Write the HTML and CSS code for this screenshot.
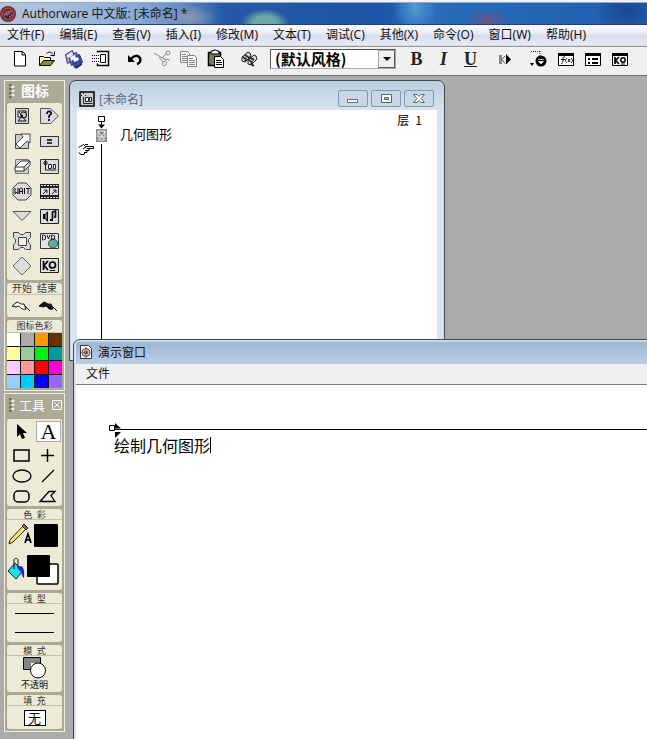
FILE: index.html
```html
<!DOCTYPE html>
<html lang="zh-CN">
<head>
<meta charset="utf-8">
<title>Authorware 中文版</title>
<link rel="stylesheet" href="styles.css">
</head>
<body>
<header class="titlebar">
  <svg class="logo" width="18" height="18" viewBox="0 0 18 18"><circle cx="8" cy="9" r="8" fill="#74282f"/><circle cx="8" cy="9" r="6.5" fill="#b8424e"/><circle cx="8" cy="9" r="5" fill="#27353a"/><path d="M4 10c1-4 5-5 8-3c-2 0-3 1-4 3zM9 12c2 0 3-1 3-3" fill="#b84850" stroke="#d08080" stroke-width=".6"/></svg>
  <h1>Authorware 中文版: [未命名] *</h1>
</header>
<nav class="menubar">
  <button>文件(F)</button><button>编辑(E)</button><button>查看(V)</button><button>插入(I)</button><button>修改(M)</button><button>文本(T)</button><button>调试(C)</button><button>其他(X)</button><button>命令(O)</button><button>窗口(W)</button><button>帮助(H)</button>
</nav>
<div class="toolbar">
  <div class="group">
    <button aria-label="新建"><svg width="20" height="20" viewBox="0 0 20 20"><path d="M4.500 2.500h8l3 3v11.500h-11zM12 2.500v3.500h3.500" fill="#fff" stroke="#000"/></svg></button>
    <button aria-label="打开"><svg width="20" height="20" viewBox="0 0 20 20"><path d="M2.500 16.500v-9h4l1 1h6v3" fill="#ffffb0" stroke="#000"/><path d="M2.500 16.500l4-5h11l-4 5z" fill="#8c8c38" stroke="#000"/><path d="M9.500 4.500c2-2 5-2 6.500 1M17.500 2.500v4h-4" fill="none" stroke="#000"/></svg></button>
    <button aria-label="全部保存"><svg width="20" height="20" viewBox="0 0 20 20"><g stroke="#303078"><path d="M1.500 5.500l7-4l3 9l-8 4z" fill="#aab2e4"/><path d="M4.500 7.500l8-4l3 9l-8 4z" fill="#6974c2"/><path d="M7.500 9.500l8-4l3 8l-8 5z" fill="#3b47a8"/></g><path d="M3 6l5-3l1 3l-5 3zM6 8l5-2l1 3l-5 3zM9 10l5-2l1 3l-5 2z" fill="#f4f4ff"/><path d="M11 18l7-4v2l-6 4z" fill="#22266a"/></svg></button>
    <button aria-label="导入"><svg width="20" height="20" viewBox="0 0 20 20"><path d="M6.500 3.500v-1h11v14h-11v-2" fill="#fff" stroke="#000" stroke-width="1.500"/><path d="M1 6.500h8M1 9.500h8M1 12.500h8" stroke="#000" stroke-dasharray="1 1"/><path d="M9.500 5.500h5v8h-5z" fill="#fff" stroke="#000"/></svg></button>
  </div>
  <div class="group">
    <button aria-label="撤消"><svg width="20" height="20" viewBox="0 0 20 20"><path d="M6 10c3-4 7-4 9-1c1 3 0 5-3 6" fill="none" stroke="#000" stroke-width="2.500"/><path d="M3 6v7h7z"/></svg></button>
    <button aria-label="剪切"><svg width="20" height="20" viewBox="0 0 20 20" fill="none" stroke="#8b8b8b"><path d="M2 4l12 7M7 8l4 5M10 9l4-4"/><circle cx="16" cy="4" r="2"/><path d="M13 10l5 1M11 13c3-2 4 0 3 3c-3 2-4 0-3-3"/></svg></button>
    <button aria-label="复制"><svg width="20" height="20" viewBox="0 0 20 20" fill="#f6f6f6" stroke="#858585"><path d="M1.500 2.500h7l2 2v9h-9zM3 5.500h4M3 7.500h6M3 9.500h6M3 11.500h5"/><path d="M8.500 6.500h7l2 2v9h-9zM10 9.500h4M10 11.500h6M10 13.500h6M10 15.500h6"/></svg></button>
    <button aria-label="粘贴"><svg width="20" height="20" viewBox="0 0 20 20"><path d="M2.500 3.500h12v13h-12z" fill="#7c7c4c" stroke="#000" stroke-width="1.500"/><path d="M5 4V2h2l1-1h2l1 1h2v3H5z" fill="#eee" stroke="#000"/><path d="M8.500 7.500h6l3 3v8h-9z" fill="#fff" stroke="#000"/><path d="M10 11.500h5M10 13.500h6M10 15.500h6" stroke="#000"/></svg></button>
  </div>
  <div class="group">
    <button aria-label="查找"><svg width="20" height="20" viewBox="0 0 20 20" fill="#d8d8d8" stroke="#222"><path d="M8 3l-6 5v4l3 1l6-6l-1-3zM14 6l-6 5v4l3 1l6-6l-1-3z"/><path d="M3 8l3 2l-1 3M5 6l3 2M9 11l3 2l-1 3M11 9l3 2M8 8l3 1M11 15l3 2" stroke-width="1.700"/></svg></button>
  </div>
  <div class="combo"><select aria-label="文本风格"><option>(默认风格)</option></select><i></i></div>
  <div class="group letters">
    <button aria-label="粗体"><b>B</b></button><button aria-label="斜体"><em>I</em></button><button aria-label="下划线"><u>U</u></button>
  </div>
  <div class="group">
    <button aria-label="运行"><svg width="20" height="20" viewBox="0 0 20 20"><path d="M4 6h3v9H4z" fill="#888"/><path d="M10 7l-3 3.500l3 4" fill="none" stroke="#555"/><path d="M11 5l5 5.500l-5 5z"/></svg></button>
  </div>
  <div class="group">
    <button aria-label="控制面板"><svg width="20" height="20" viewBox="0 0 20 20"><path d="M2 2.500h9M11 2v5" stroke="#222" stroke-dasharray="1 1"/><circle cx="12" cy="12" r="5.500"/><path d="M9 10.500h6M9.500 12.500h5l-2.500 2.500z" fill="#fff" stroke="#fff" stroke-width=".7"/><path d="M1 14h4l-2 3z"/></svg></button>
    <button aria-label="函数"><svg width="20" height="20" viewBox="0 0 20 20"><path d="M2.500 4.500h15v12h-15z" fill="#fff" stroke="#000"/><path d="M2 4h16v3H2z"/><path d="M9 8c-2-1-2 1-2 3s-1 4-2 4M5 10.500h4M11 9c-2 2-2 3 0 5M15 9c2 2 2 3 0 5M12 10l2 3M14 10l-2 3" fill="none" stroke="#000" stroke-width=".9"/></svg></button>
    <button aria-label="变量"><svg width="20" height="20" viewBox="0 0 20 20"><path d="M2.500 4.500h15v12h-15z" fill="#fff" stroke="#000"/><path d="M2 4h16v3H2zM5 9h2v2H5zM5 13h2v2H5zM9 9h6v2H9zM9 13h6v2H9z"/></svg></button>
    <button aria-label="知识对象"><svg width="20" height="20" viewBox="0 0 20 20"><path d="M2.500 4.500h15v12h-15z" fill="#fff" stroke="#000"/><path d="M2 4h16v3H2z"/><path d="M5 8v7M9 8l-3.500 3.500L9 15" fill="none" stroke="#000" stroke-width="1.700"/><circle cx="13" cy="11" r="2.200" fill="none" stroke="#000" stroke-width="1.500"/><path d="M11 15h4" stroke="#000"/></svg></button>
  </div>
</div>
<main class="workspace">
  <section class="window flow">
    <header>
      <svg width="16" height="16" viewBox="0 0 16 16"><path d="M1 1h14v14H1z" fill="#d0caca" stroke="#000" stroke-width="1.500"/><path d="M4.500 5v7.500h9M2 4.500h5M4.500 2v5" stroke="#222" fill="none"/><path d="M6.500 6.500h3v4h-3zM10.500 6.500h2v4h-2z" fill="#fff" stroke="#222"/><path d="M4.500 3l1.500 1.500l-1.500 1.500l-1.500-1.500z" fill="#fff"/></svg>
      <h2>[未命名]</h2>
      <div class="winbtns">
        <button aria-label="最小化"><svg width="14" height="12" viewBox="0 0 14 12"><path d="M1.500 6.500h10v3h-10z" fill="#fff" stroke="#66717d"/></svg></button>
        <button aria-label="最大化"><svg width="14" height="12" viewBox="0 0 14 12"><path d="M2.500 1.500h10v8h-10z" fill="#fff" stroke="#56616d"/><path d="M5.500 4.500h4v2h-4z" fill="#aebfd0" stroke="#56616d"/></svg></button>
        <button aria-label="关闭"><svg width="14" height="12" viewBox="0 0 14 12"><path d="M1.500 1.500h3.500l2 2l2-2h3.500l-3.500 4l3.500 4h-3.500l-2-2l-2 2h-3.500l3.500-4z" fill="#fff" stroke="#56616d"/></svg></button>
      </div>
    </header>
    <div class="flowbody">
      <div class="line">
        <svg width="32" height="244" viewBox="0 0 32 244"><path d="M21.500 6.500h6v5h-6zM24.500 12v6" fill="#fff" stroke="#000"/><path d="M21 14.500h7l-3.500 4z"/><path d="M19 19h11v13H19z" fill="#8e8e8e"/><path d="M21 21h7v6h-7zM21 22l7 8M28 22l-7 8M22 30h5" fill="none" stroke="#eee"/><path d="M24.500 34v210" stroke="#000"/><path d="M1.500 37.500l5-3l2 2h8v2h-7M12 38.500v2h-4M10 40.500v2h-3M8 42.500l-1 2h-3l-2.500-2M9 37l-3 2M8 34.500h3" fill="#fff" stroke="#000"/></svg>
        <span>几何图形</span>
      </div>
      <p>层&ensp;1</p>
    </div>
  </section>

  <section class="window stage">
    <header>
      <svg width="14" height="16" viewBox="0 0 14 16"><path d="M1.500 1.500h8l3 3v10h-11z" fill="#fff" stroke="#333"/><circle cx="7" cy="8.500" r="4" fill="#dbc5bc" stroke="#553e3b"/><circle cx="7" cy="8.500" r="2" fill="#54403e"/><path d="M7 3v11M2 8.500h10" stroke="#8a706a" stroke-dasharray="1 1"/></svg>
      <h2>演示窗口</h2>
    </header>
    <nav><button>文件</button></nav>
    <div class="canvas">
      <div class="ruler"><svg width="12" height="16" viewBox="0 0 12 16"><path d="M.500 2.500h5v5h-5z" fill="#fff" stroke="#000"/><path d="M6 0l6 5.500H6zM6 9h6l-6 6z"/></svg></div>
      <p class="typed">绘制几何图形</p>
    </div>
  </section>

  <aside class="palette icons">
    <header><i class="grip"></i><h2>图标</h2></header>
    <div class="panel grid">
      <button aria-label="显示"><svg viewBox="0 0 22 20"><path d="M4.500 2.500h13v15h-13z" fill="#d4d4d4" stroke="#333"/><path d="M7 5h8v6H7z" fill="#fff" stroke="#111"/><circle cx="12.500" cy="9" r="3" fill="#ccc" stroke="#111"/><path d="M8 6l7 9H7l5-6" fill="none" stroke="#111"/></svg></button>
      <button aria-label="判断"><svg viewBox="0 0 22 20"><path d="M2.500 2.500h10l8 7.500l-8 7.500h-10z" fill="#ddd" stroke="#555"/><path d="M9 8c0-4 5-3 4 0l-2 2v2M11 13v2" fill="none" stroke="#000" stroke-width="1.700"/></svg></button>
      <button aria-label="移动"><svg viewBox="0 0 22 20"><path d="M4.500 3.500h13v14h-13z" fill="#ccc" stroke="#444"/><path d="M5 13l7-7l-2-3h9v9l-3-2l-7 7z" fill="#fff" stroke="#444"/></svg></button>
      <button aria-label="计算"><svg viewBox="0 0 22 20"><path d="M2.500 5.500h18v10h-18z" fill="#ddd" stroke="#333"/><path d="M9 9h5M9 12h5" stroke="#000" stroke-width="1.500"/></svg></button>
      <button aria-label="擦除"><svg viewBox="0 0 22 20"><path d="M4.500 3.500h13v14h-13z" fill="#ccc" stroke="#777"/><path d="M4 11l6-6h9l-6 6zM4 11v4h9v-4M13 15l6-6V5" fill="#fff" stroke="#333"/></svg></button>
      <button aria-label="群组"><svg viewBox="0 0 22 20"><path d="M2.500 3.500h18v14h-18z" fill="#ddd" stroke="#333"/><path d="M7.500 4v10h11M5 7h5M6 5l3 4M9 5l-3 4" fill="none" stroke="#222"/><path d="M10.500 8.500h3v4h-3zM15.500 8.500h2v4h-2z" fill="#fff" stroke="#222"/></svg></button>
      <button aria-label="等待"><svg viewBox="0 0 22 20"><path d="M7 2h8l5 5v7l-5 5H7l-5-5V7z" fill="#ddd" stroke="#444"/><path d="M4 7v6l1.500-2L7 13V7M8.500 13V8l1-1h1l1 1v5M8.500 10.500h3M13.500 7v6M15 7.500h4M17 7v6" fill="none" stroke="#111"/></svg></button>
      <button aria-label="数字电影"><svg viewBox="0 0 22 20"><path d="M2 3h19v15H2z" fill="#222"/><path d="M3 4.500h17M3 16.500h17" stroke="#ddd" stroke-dasharray="2 1"/><path d="M3 7h8v7H3zM12 7h8v7h-8z" fill="#ddd"/><path d="M5 13l4-4M6 9h3v3M14 13l4-4M15 9h3v3" fill="none" stroke="#222"/></svg></button>
      <button aria-label="导航"><svg viewBox="0 0 22 20"><path d="M2 5.500h18l-9 9z" fill="#ddd" stroke="#555"/></svg></button>
      <button aria-label="声音"><svg viewBox="0 0 22 20"><path d="M2.500 3.500h18v14h-18z" fill="#ddd" stroke="#222"/><path d="M10 5v11l-3-3H5V8h2zM12 13h3v2h-3z"/><path d="M14.500 13V6l3-1v6M16 11h2" fill="none" stroke="#111" stroke-width="1.700"/><path d="M8 8v5" stroke="#ddd"/></svg></button>
      <button aria-label="框架"><svg viewBox="0 0 22 20"><path d="M2.500 1.500h5l2 2h3l2-2h5v5l-2 2v3l2 2v5h-5l-2-2h-3l-2 2h-5v-5l2-2v-3l-2-2z" fill="#ddd" stroke="#444"/><path d="M7.500 6.500h8v8h-8z" fill="#f3f3e9" stroke="#444"/></svg></button>
      <button aria-label="DVD"><svg viewBox="0 0 22 20"><path d="M2.500 2.500h18v15h-18z" fill="#e4e4e4" stroke="#333"/><circle cx="15" cy="12.500" r="4.500" fill="#55a8bb" stroke="#448"/><path d="M11 12l3-3l2 3l-3 3zM16 14l3-1l-2 3z" fill="#74bb55"/><path d="M4.500 4v5h1l2-1V5l-2-1zM9 4l1.500 4L12 4M13.500 4v5l3-1V5l-2-1z" fill="none" stroke="#222"/></svg></button>
      <button aria-label="交互"><svg viewBox="0 0 22 20"><path d="M11 1l9 9l-9 9l-9-9z" fill="#ddd" stroke="#666"/></svg></button>
      <button aria-label="知识对象"><svg viewBox="0 0 22 20"><path d="M2.500 2.500h18v14h-18z" fill="#ddd" stroke="#222"/><path d="M5.500 5v9M10 5l-4 4.500L10 14" fill="none" stroke="#000" stroke-width="1.700"/><circle cx="14.500" cy="9" r="3" fill="none" stroke="#000" stroke-width="1.700"/><path d="M12 14.500h5" stroke="#000"/></svg></button>
    </div>
    <div class="panel">
      <h3 class="large">开始&ensp;结束</h3>
      <div class="flags">
        <button aria-label="开始"><svg viewBox="0 0 22 20"><path d="M2 10l5-4c2 0 3 3 7 2l2 5c-4 1-5-1-7-3l-3 1zM15 10l5 5" fill="#fff" stroke="#111"/></svg></button>
        <button aria-label="结束"><svg viewBox="0 0 22 20"><path d="M2 10l5-4c2 0 3 3 7 2l2 5c-4 1-5-1-7-3l-3 1zM15 10l5 5" fill="#111" stroke="#111"/></svg></button>
      </div>
    </div>
    <div class="panel colours">
      <h3>图标色彩</h3>
      <div class="swatches"><i class="c1"></i><i class="c2"></i><i class="c3"></i><i class="c4"></i><i class="c5"></i><i class="c6"></i><i class="c7"></i><i class="c8"></i><i class="c9"></i><i class="c10"></i><i class="c11"></i><i class="c12"></i><i class="c13"></i><i class="c14"></i><i class="c15"></i><i class="c16"></i></div>
    </div>
  </aside>

  <aside class="palette tools">
    <header><i class="grip"></i><h2>工具</h2><button aria-label="关闭"><svg width="10" height="10" viewBox="0 0 10 10"><path d="M.500 .500h9v9h-9zM2.500 2.500l5 5M7.500 2.500l-5 5" fill="none" stroke="#fff"/></svg></button></header>
    <div class="panel shapes">
      <button aria-label="选择"><svg viewBox="0 0 22 20"><path d="M7 2v13l3-3l2 5l3-1l-2-5h4z"/></svg></button>
      <button class="on" aria-label="文本">A</button>
      <button aria-label="矩形"><svg viewBox="0 0 22 20"><path d="M4 5h15v11H4z" fill="none" stroke="#000" stroke-width="1.500"/></svg></button>
      <button aria-label="直线"><svg viewBox="0 0 22 20"><path d="M4 10.500h13M10.500 4v13" stroke="#000" stroke-width="1.500"/></svg></button>
      <button aria-label="椭圆"><svg viewBox="0 0 22 20"><ellipse cx="12" cy="10" rx="9" ry="6" fill="none" stroke="#000" stroke-width="1.300"/></svg></button>
      <button aria-label="斜线"><svg viewBox="0 0 22 20"><path d="M5 16L17 4" stroke="#000" stroke-width="1.300"/></svg></button>
      <button aria-label="圆角矩形"><svg viewBox="0 0 22 20"><rect x="4" y="5" width="15" height="11" rx="4" fill="none" stroke="#000" stroke-width="1.500"/></svg></button>
      <button aria-label="多边形"><svg viewBox="0 0 22 20"><path d="M3 15.500l9-10h6l-4 4l4 6z" fill="none" stroke="#000" stroke-width="1.300"/></svg></button>
    </div>
    <div class="panel">
      <h3>色&ensp;彩</h3>
      <div class="paint"><svg width="54" height="70" viewBox="0 0 54 70"><path d="M3 20L16 6l3 3L6 22l-4 2z" fill="#ffe85c" stroke="#222"/><path d="M15 6l2-2l4 4l-2 2z" fill="#b65846" stroke="#222"/><path d="M18 23l3-9l3 9M19 20h5" fill="none" stroke="#000" stroke-width="1.700"/><rect x="27" y="4" width="24" height="23" rx="1"/><rect x="30" y="44" width="21" height="20" rx="1" fill="#fff" stroke="#000" stroke-width="1.500"/><rect x="20" y="35" width="23" height="22" rx="1"/><path d="M1 51l7-8l8 8l-7 8z" fill="#22dbed" stroke="#222"/><path d="M7 49v-9c0-2 4-2 4 0v8" fill="none" stroke="#111"/><path d="M10 47c5-3 8 0 7 11c-2 0-2-7-5-8" fill="#2028bd"/></svg></div>
    </div>
    <div class="panel">
      <h3>线&ensp;型</h3>
      <div class="lines"><hr><hr></div>
    </div>
    <div class="panel">
      <h3>模&ensp;式</h3>
      <div class="mode"><svg width="26" height="23" viewBox="0 0 26 23"><path d="M1.500 1.500h17v12h-17z" fill="#858585" stroke="#000"/><path d="M9 7h8v7H9z" fill="#fff"/><circle cx="16" cy="14.500" r="7.500" fill="#fff" stroke="#000"/></svg><span>不透明</span></div>
    </div>
    <div class="panel">
      <h3>填&ensp;充</h3>
      <div class="fill"><button>无</button></div>
    </div>
  </aside>
</main>
</body>
</html>
```
FILE: styles.css
```css
* { box-sizing: border-box; }
body { margin: 0; height: 100vh; display: flex; flex-direction: column; overflow: hidden; font: 12px "Open Sans", "Noto Sans CJK SC", sans-serif; color: #111; background: #ababab; }
h1, h2, h3, p { margin: 0; font-weight: normal; }
h1, h2 { font-size: 12px; }
button { margin: 0; padding: 0; border: 0; background: none; font: inherit; color: inherit; display: flex; align-items: center; justify-content: center; }
svg { display: block; flex: none; }

.titlebar { height: 25px; flex: none; display: flex; align-items: center; gap: 4px; padding-top: 3px; border-bottom: 1px solid #223f76; line-height: 20px;
  background:
    linear-gradient(#eef3f7 0 2px, #91abc0 2px 3px, transparent 3px),
    radial-gradient(ellipse 24px 14px at 265px 23px, #6aa7a6 0 50%, transparent),
    radial-gradient(ellipse 28px 13px at 190px 18px, #8797af, transparent),
    radial-gradient(ellipse 22px 10px at 487px 20px, #6c5585, transparent),
    radial-gradient(ellipse 22px 28px at 415px 8px, #4f9bd6, transparent),
    radial-gradient(ellipse 30px 24px at 626px 10px, #1a4690, transparent),
    linear-gradient(90deg, #b3c2d7 0, #a9bfdd 60px, #88a8d4 140px, #658cc3 180px, #2459a6 225px, #1d55aa 380px, #2a6cba 430px, #1f5db0 100%); }

.menubar { height: 21px; flex: none; display: flex; border-bottom: 1px solid #d8dae2; background: linear-gradient(#fbfcfe, #e7ebf5 45%, #d9deee 50%, #e6eaf6); }
.menubar button { flex: 0 1 auto; padding: 0 7px; line-height: 18px; white-space: nowrap; }
.menubar button + button { margin-left: 1px; }
.menubar { font-family: "Noto Sans", "Noto Sans CJK SC", sans-serif; }

.toolbar { height: 30px; flex: none; display: flex; align-items: center; gap: 7px; padding: 0 6px 4px; background: #f0f0f0; border-top: 1px solid #999; border-bottom: 1px solid #6c6c6c; }
.group { display: flex; }
.group button { width: 27px; height: 24px; }
.letters { font: 18px "Liberation Serif", serif; color: #222; }
.letters em { font-weight: bold; }
.letters u { font-weight: bold; }
.combo { width: 126px; height: 20px; display: flex; background: #fff; border: 1px solid #555; border-right-color: #aaa; border-bottom-color: #aaa; }
.combo select { appearance: none; flex: 1; min-width: 0; border: 0; padding: 0 4px; background: #fff; color: #000; font: bold 15px/18px "Noto Sans CJK SC", sans-serif; }
.combo i { width: 17px; background: #f0f0f0; border: 1px solid #aaa; border-right-color: #555; border-bottom-color: #555; display: grid; place-items: center; }
.combo i::before { content: ""; border: 4px solid transparent; border-top-color: #000; border-bottom: 0; }

.workspace { flex: 1; min-height: 0; position: relative; overflow: hidden; background: #ababab; }
.window { position: absolute; display: flex; flex-direction: column; border: 1px solid #3c4650; }
.window header { display: flex; align-items: center; }
.window h2 { flex: 1; }

.flow { left: 69px; top: 4px; width: 376px; height: 281px; padding: 0 7px 7px; border-radius: 7px 7px 0 0; background: linear-gradient(#bccddf, #d8e4f1 30px); }
.flow header { height: 29px; padding: 6px 3px 0 2px; gap: 4px; color: #586576; }
.winbtns { display: flex; gap: 3px; }
.winbtns button { width: 30px; height: 17px; border: 1px solid #8198ae; border-radius: 2px; background: #c8d7e6; }
.flowbody { flex: 1; min-height: 0; display: flex; justify-content: space-between; background: #fff; font: 13px/20px "Noto Sans CJK SC", sans-serif; color: #000; overflow: hidden; }
.line { display: flex; gap: 11px; }
.line span { padding-top: 14px; }
.flowbody p { padding-right: 15px; font-size: 12px; }

.stage { left: 73px; right: -4px; top: 263px; bottom: -4px; border-radius: 7px 0 0 0; padding-left: 2px; background: #d8e3ef; }
.stage header { height: 24px; padding-left: 3px; gap: 5px; border-radius: 6px 0 0 0; background: linear-gradient(#dce7f3, #9db6d3 3px, #bacee7); }
.stage nav { height: 21px; display: flex; padding: 0 0 3px 10px; background: #f0f0f0; border-bottom: 1px solid #777; }
.canvas { flex: 1; padding: 38px 0 0 33px; background: #fff; }
.ruler { height: 14px; background: linear-gradient(#000, #000) 0 6px / 100% 1px no-repeat; }
.typed { display: block; width: fit-content; margin-left: 5px; border-right: 1px solid #000; font: 16px/16px "Noto Sans CJK SC", sans-serif; color: #000; }

.palette { position: absolute; left: 4px; width: 61px; display: flex; flex-direction: column; gap: 3px; padding: 0 2px 2px; background: #aaaa96; border: 1px solid #f0f0df; }
.icons { top: 4px; }
.tools { top: 317px; }
.palette header { height: 19px; display: flex; align-items: center; gap: 6px; padding-left: 2px; color: #fff; }
.palette h2 { flex: 1; font-size: 14px; line-height: 19px; white-space: nowrap; }
.icons h2 { font-weight: bold; }
.tools header { height: 22px; gap: 4px; }
.tools h2 { font-size: 13px; }
.grip { width: 6px; height: 14px; background: radial-gradient(circle at 1px 1px, #73675a 1px, transparent 2px) 0 0 / 6px 4px, radial-gradient(circle at 4px 3px, #eeeedd 1px, transparent 2px) 0 0 / 6px 4px; }
.panel { background: #ecebd7; border-radius: 3px; }
.grid { display: grid; grid-template-columns: 27px 27px; grid-auto-rows: 25px; padding-bottom: 2px; padding-left: 1px; }
.grid svg, .flags svg, .shapes svg { width: 22px; height: 20px; }
.panel h3 { font-size: 9px; line-height: 11px; height: 11px; text-align: center; white-space: nowrap; border-bottom: 1px solid #c2c1ad; color: #333; }
.panel h3.large { font-size: 10px; height: 12px; }
.panel.colours h3 { height: 13px; line-height: 12px; }
.flags { display: grid; grid-template-columns: 27px 27px; height: 22px; }
.swatches { display: grid; grid-template-columns: repeat(4, 1fr); grid-auto-rows: 13px; gap: 1px; background: #151515; }
.c1 { background: #fff; } .c2 { background: #aaa; } .c3 { background: #ff9800; } .c4 { background: #663300; }
.c5 { background: #ffff99; } .c6 { background: #99cc99; } .c7 { background: #00f20d; } .c8 { background: #009898; }
.c9 { background: #ffccff; } .c10 { background: #ff9898; } .c11 { background: #f00; } .c12 { background: #ff00cb; }
.c13 { background: #99ccff; } .c14 { background: #00ccff; } .c15 { background: #00f; } .c16 { background: #9966ff; }

.shapes { display: grid; grid-template-columns: 27px 27px; grid-template-rows: 25px 22px 20px 20px; }
.shapes .on { background: #fff; border: 1px solid #aaa; font: 22px/20px "Liberation Serif", serif; margin: 2px 0 2px 2px; color: #000; }
.paint { height: 70px; }
.lines { height: 38px; display: flex; flex-direction: column; gap: 18px; padding: 9px 8px 0; }
.lines hr { width: 100%; height: 1px; margin: 0; border: 0; background: #000; }
.mode { height: 36px; display: flex; flex-direction: column; align-items: center; font-size: 9px; line-height: 12px; }
.fill { height: 23px; display: grid; place-items: center; }
.fill button { width: 22px; height: 16px; background: #fff; border: 1px solid #000; font-size: 13px; line-height: 14px; }
```
